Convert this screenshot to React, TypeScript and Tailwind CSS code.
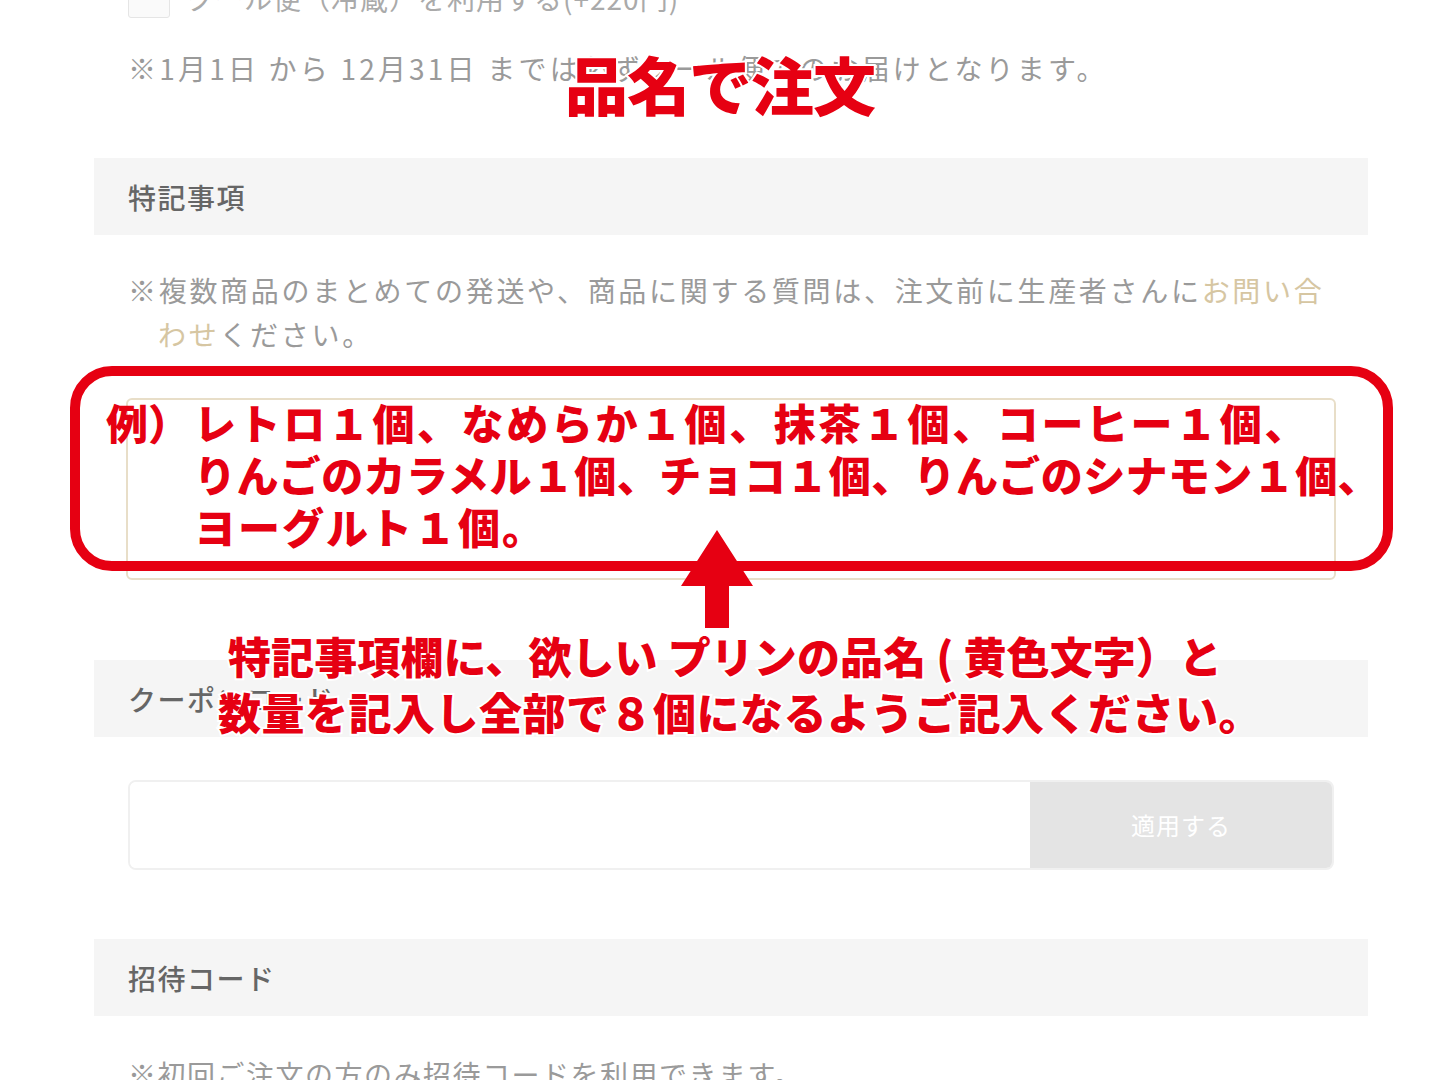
import React from "react";

const jp = "font-['Noto_Sans_CJK_JP','Noto_Sans',sans-serif]";

function SectionHeader({ title }: { title: string }) {
  return (
    <div className="bg-[#f5f5f5] h-[77px] flex items-center px-[34px]">
      <span className="text-[28px] font-medium text-[#666] tracking-[1.5px]">{title}</span>
    </div>
  );
}

export default function App() {
  return (
    <div className={`relative w-[1440px] h-[1080px] overflow-hidden bg-white ${jp}`}>
      {/* page content */}
      <div className="px-[94px] w-[1462px]">
        {/* cool delivery checkbox (cut off) */}
        <div className="flex items-center gap-[16px] px-[34px] mt-[-22px] h-[40px]">
          <div className="w-[42px] h-[40px] border border-[#e5e5e5] rounded-[3px] bg-[#fafafa]" />
          <span className="text-[28px] text-[#aaa] tracking-[1px]">クール便（冷蔵）を利用する(+220円)</span>
        </div>
        <p className="mt-[28px] px-[34px] text-[28px] leading-[44px] text-[#9a9a9a] tracking-[3.2px]">
          ※1月1日 から 12月31日 までは必ずクール便でのお届けとなります。
        </p>

        <div className="mt-[68px] w-[1274px]">
          <SectionHeader title="特記事項" />
        </div>

        <p className="mt-[33px] pl-[64px] pr-[28px] -indent-[30px] w-[1274px] text-[28px] leading-[44px] text-[#9a9a9a] tracking-[2.7px]">
          ※複数商品のまとめての発送や、商品に関する質問は、注文前に生産者さんに
          <span className="text-[#d6c6a2]">お問い合わせ</span>ください。
        </p>

        <div className="mt-[42px] ml-[32px] w-[1210px] h-[182px] border-2 border-[#e8dec8] rounded-[6px] relative">
          <svg className="absolute right-[6px] bottom-[6px]" width="12" height="12" viewBox="0 0 12 12">
            <path d="M11 3 L3 11 M11 7 L7 11" stroke="#bbb" strokeWidth="1" />
          </svg>
        </div>

        <div className="mt-[80px] w-[1274px]">
          <SectionHeader title="クーポンコード" />
        </div>

        <div className="mt-[43px] ml-[34px] w-[1206px] h-[90px] flex rounded-[8px] overflow-hidden border-2 border-[#f0f0f0]">
          <div className="flex-1 bg-white" />
          <button className="w-[302px] bg-[#e4e4e4] text-white text-[24px] tracking-[1px]">適用する</button>
        </div>

        <div className="mt-[69px] w-[1274px]">
          <SectionHeader title="招待コード" />
        </div>

        <p className="mt-[36px] px-[34px] text-[28px] leading-[44px] text-[#9a9a9a] tracking-[1.5px]">
          ※初回ご注文の方のみ招待コードを利用できます。
        </p>
      </div>

      {/* red annotations */}
      <div className="absolute left-[565px] top-[50px] text-[63px] leading-[66px] font-black text-[#e60012] tracking-[-1px] [paint-order:stroke] [-webkit-text-stroke:4px_white]">
        品名で注文
      </div>

      <div className="absolute left-[70px] top-[366px] w-[1323px] h-[205px] border-[10px] border-[#e60012] rounded-[42px]" />

      <div className="absolute left-[106px] top-[396px] flex font-black text-[#e60012] text-[42px] leading-[52px]">
        <span className="w-[88px]">例）</span>
        <div className="flex flex-col whitespace-nowrap">
          <span className="tracking-[2.6px]">レトロ１個、なめらか１個、抹茶１個、コーヒー１個、</span>
          <span className="tracking-[0.4px]">りんごのカラメル１個、チョコ１個、りんごのシナモン１個、</span>
          <span className="tracking-[2px]">ヨーグルト１個。</span>
        </div>
      </div>

      <svg className="absolute left-[681px] top-[530px]" width="72" height="98" viewBox="0 0 72 98">
        <polygon points="36,0 72,56 48,56 48,98 24,98 24,56 0,56" fill="#e60012" />
      </svg>

      <div className="absolute left-[228px] top-[627px] flex flex-col items-start font-black text-[#e60012] text-[43px] leading-[56px] whitespace-nowrap [paint-order:stroke] [-webkit-text-stroke:4px_white]">
        <span className="tracking-[0.1px]">特記事項欄に、欲しい プリンの品名 ( 黄色文字）と</span>
        <span className="-ml-[10px] tracking-[0.5px]">数量を記入し全部で８個になるようご記入ください。</span>
      </div>
    </div>
  );
}
